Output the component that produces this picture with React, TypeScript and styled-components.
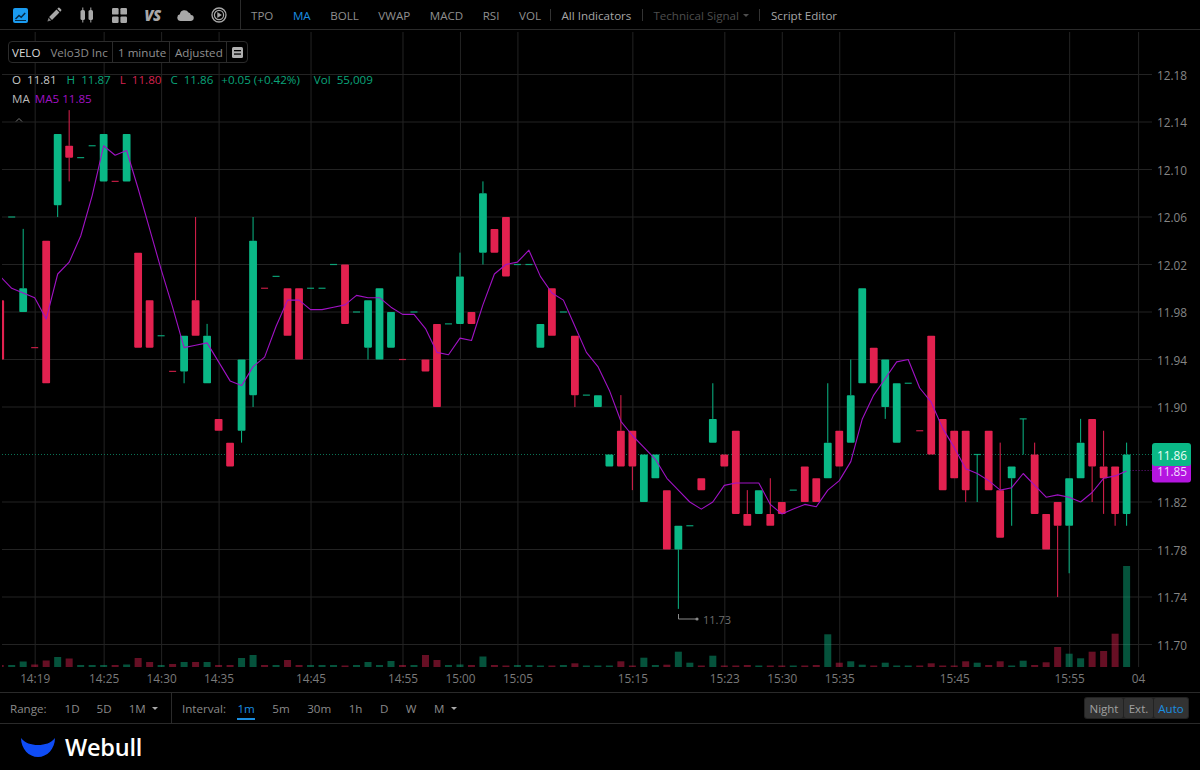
import React from "react";
import styled, { createGlobalStyle } from "styled-components";

const GlobalStyle = createGlobalStyle`
  html, body { margin: 0; padding: 0; background: #000; }
  body { font-family: "Open Sans", "Liberation Sans", sans-serif; }
`;

const Page = styled.div`
  width: 1200px;
  height: 770px;
  display: flex;
  flex-direction: column;
  background: #000;
  overflow: hidden;
  color: #999;
  font-size: 11.6px;
`;

const Toolbar = styled.div`
  height: 28px;
  padding-top: 1px;
  flex: none;
  display: flex;
  align-items: stretch;
  border-bottom: 1px solid #2a2a2a;
`;

const IconGroup = styled.div`
  width: 241px;
  margin-top: -1px;
  padding-top: 1px;
  box-sizing: border-box;
  padding-left: 4px;
  display: flex;
  align-items: center;
  border-right: 1px solid #2a2a2a;
`;

const IconSlot = styled.div`
  width: 33px;
  height: 100%;
  display: flex;
  align-items: center;
  justify-content: center;
  color: #a8a8a8;
`;

const VsMark = styled.span`
  font-family: "Open Sans", sans-serif;
  font-style: italic;
  font-weight: 800;
  font-size: 15px;
  letter-spacing: -0.5px;
  color: #a8a8a8;
`;

const Indicators = styled.div`
  display: flex;
  align-items: center;
  padding-left: 10px;
  gap: 19.5px;
`;

const Indicator = styled.span<{ $active?: boolean }>`
  color: ${(p) => (p.$active ? "#1a8ee0" : "#8f8f8f")};
`;

const ToolGroup = styled.div`
  display: flex;
  align-items: center;
  margin-left: -10.5px;
  gap: 10.5px;
`;

const Rule = styled.span`
  width: 1px;
  height: 12px;
  background: #333;
`;

const ToolLink = styled.span<{ $muted?: boolean }>`
  display: inline-flex;
  align-items: center;
  gap: 4px;
  color: ${(p) => (p.$muted ? "#4d4d4d" : "#a6a6a6")};
`;

const Caret = styled.span<{ $color?: string }>`
  width: 0;
  height: 0;
  border-left: 3px solid transparent;
  border-right: 3px solid transparent;
  border-top: 3px solid ${(p) => p.$color ?? "#aaa"};
`;

const ChartArea = styled.div`
  position: relative;
  height: 662px;
  flex: none;
`;

const ChartSvg = styled.svg`
  display: block;
  width: 1200px;
  height: 662px;
`;

const AxisText = styled.text<{ $tone?: string }>`
  font-family: "Open Sans", "Liberation Sans", sans-serif;
  font-size: 11.8px;
  fill: ${(p) => p.$tone ?? "#858585"};
`;

const LowText = styled(AxisText)`
  font-size: 11px;
`;

const InfoBox = styled.div`
  position: absolute;
  left: 8px;
  top: 11px;
  height: 20px;
  display: flex;
  align-items: stretch;
  border: 1px solid #2b2b2b;
  border-radius: 4px;
  background: #000;
`;

const InfoCell = styled.span<{ $strong?: boolean; $w: number; $pad: number }>`
  width: ${(p) => p.$w}px;
  box-sizing: border-box;
  padding-left: ${(p) => p.$pad}px;
  display: flex;
  align-items: center;
  white-space: pre;
  color: ${(p) => (p.$strong ? "#d8d8d8" : "#909090")};
  border-right: 1px solid #2b2b2b;
`;

const InfoName = styled.span`
  margin-left: 10px;
  color: #8c8c8c;
`;

const InfoIcon = styled.span`
  width: 20px;
  display: flex;
  align-items: center;
  justify-content: center;
`;

const Legend = styled.div`
  position: absolute;
  left: 12px;
  top: 40px;
  display: flex;
  flex-direction: column;
  gap: 1px;
`;

const LegendRow = styled.div`
  height: 18.5px;
  display: flex;
  align-items: center;
  white-space: pre;
`;

const LegendValue = styled.span<{ $c: string; $gap?: number }>`
  color: ${(p) => p.$c};
  margin-right: ${(p) => p.$gap ?? 0}px;
`;

const Collapse = styled.svg`
  position: absolute;
  left: 15px;
  top: 87px;
`;

const RangeBar = styled.div`
  height: 30px;
  flex: none;
  display: flex;
  align-items: center;
  border-top: 1px solid #2a2a2a;
  border-bottom: 1px solid #2a2a2a;
`;

const RangeGroup = styled.div`
  width: 172px;
  height: 100%;
  box-sizing: border-box;
  padding-left: 10px;
  display: flex;
  align-items: center;
  gap: 17px;
  border-right: 1px solid #2a2a2a;
`;

const IntervalGroup = styled.div`
  height: 100%;
  padding-left: 10px;
  display: flex;
  align-items: center;
  gap: 17.5px;
`;

const BarLabel = styled.span<{ $gap?: number }>`
  color: #8a8a8a;
  margin-right: ${(p) => p.$gap ?? 0}px;
`;

const BarItem = styled.span<{ $active?: boolean }>`
  position: relative;
  height: 100%;
  display: inline-flex;
  align-items: center;
  gap: 6px;
  color: ${(p) => (p.$active ? "#1a8ee0" : "#8a8a8a")};
  &::after {
    content: "";
    display: ${(p) => (p.$active ? "block" : "none")};
    position: absolute;
    left: 0;
    right: 0;
    bottom: 3px;
    height: 2px;
    background: #1a8ee0;
  }
`;

const SessionGroup = styled.div`
  margin-left: auto;
  margin-right: 11px;
  height: 20px;
  padding: 1px;
  display: flex;
  gap: 1px;
  background: #222;
  border-radius: 3px;
`;

const SessionButton = styled.span<{ $active?: boolean; $w: number }>`
  width: ${(p) => p.$w}px;
  display: flex;
  align-items: center;
  justify-content: center;
  font-size: 11.5px;
  border-radius: 2px;
  background: #333;
  color: ${(p) => (p.$active ? "#1a8ee0" : "#a0a0a0")};
`;

const Footer = styled.div`
  flex: 1;
  display: flex;
  align-items: center;
  padding-left: 21px;
  gap: 10px;
`;

const Brand = styled.span`
  font-family: "Open Sans", sans-serif;
  font-weight: 600;
  font-size: 23.5px;
  letter-spacing: -0.2px;
  color: #fff;
`;

type Candle = [string, number, number, number?, number?];

const candles: Candle[] = [
  ["r", 1199, 1194], ["g", 1206, 1206], ["g", 1200, 1198, 1205], ["r", 1195, 1195], ["r", 1204, 1192],
  ["g", 1213, 1207, undefined, 1206], ["r", 1212, 1211, 1215, 1209], ["g", 1211, 1211], ["g", 1212, 1212], ["g", 1213, 1209],
  ["r", 1209, 1209], ["g", 1213, 1209], ["r", 1203, 1195], ["r", 1199, 1195], ["g", 1196, 1196],
  ["r", 1193, 1193], ["g", 1196, 1193, undefined, 1192], ["r", 1199, 1196, 1206], ["g", 1196, 1192, 1197], ["r", 1189, 1188],
  ["r", 1187, 1185], ["g", 1194, 1188, undefined, 1187], ["g", 1204, 1191, 1206, 1190], ["r", 1200, 1200], ["g", 1201, 1201],
  ["r", 1200, 1196], ["r", 1200, 1194], ["g", 1200, 1200], ["g", 1200, 1200], ["g", 1202, 1202],
  ["r", 1202, 1197], ["g", 1198, 1198], ["g", 1199, 1195, undefined, 1194], ["g", 1200, 1194], ["g", 1198, 1195],
  ["r", 1194, 1194], ["g", 1198, 1198], ["r", 1194, 1193], ["r", 1197, 1190], ["g", 1197, 1197],
  ["g", 1201, 1197, 1203], ["r", 1198, 1197], ["g", 1208, 1203, 1209, 1202], ["r", 1205, 1203], ["r", 1206, 1201],
  ["g", 1202, 1202], ["g", 1202, 1202], ["g", 1197, 1195], ["r", 1200, 1196], ["g", 1198, 1198],
  ["r", 1196, 1191, undefined, 1190], ["g", 1191, 1191], ["g", 1191, 1190], ["g", 1186, 1185], ["r", 1188, 1185, 1191],
  ["r", 1188, 1185, undefined, 1183], ["g", 1186, 1182], ["g", 1186, 1184], ["r", 1183, 1178], ["g", 1180, 1178, undefined, 1173],
  ["g", 1180, 1180], ["r", 1184, 1183], ["g", 1189, 1187, 1192], ["r", 1186, 1185], ["r", 1188, 1181],
  ["r", 1181, 1180, 1183], ["g", 1183, 1181], ["r", 1181, 1180, 1184], ["r", 1182, 1181], ["g", 1183, 1183],
  ["r", 1185, 1182], ["r", 1184, 1182], ["g", 1187, 1184, 1192], ["r", 1188, 1185], ["g", 1191, 1187, 1194],
  ["g", 1200, 1192], ["r", 1195, 1192], ["g", 1194, 1190, undefined, 1189], ["g", 1192, 1187], ["g", 1192, 1192],
  ["r", 1188, 1188], ["r", 1196, 1186], ["r", 1189, 1183], ["r", 1188, 1184], ["r", 1188, 1183, undefined, 1182],
  ["g", 1186, 1186, undefined, 1182], ["r", 1188, 1183], ["r", 1183, 1179, 1187], ["g", 1185, 1184, undefined, 1180], ["g", 1189, 1189, undefined, 1186],
  ["r", 1186, 1181, 1187], ["r", 1181, 1178], ["r", 1182, 1180, undefined, 1174], ["g", 1184, 1180, undefined, 1176], ["g", 1187, 1184, 1189],
  ["r", 1189, 1185, undefined, 1182], ["r", 1185, 1184, 1188, 1181], ["r", 1185, 1181, undefined, 1180], ["g", 1186, 1181, 1187, 1180],
];

const volumes = [
  2, 2, 5.5, 2.5, 6.5, 10, 8.5, 2, 2, 2, 2, 2.5, 9, 5, 2, 3, 5, 5, 5, 2,
  2, 9, 12, 2, 2, 7, 2, 2, 2, 2, 1.5, 2, 5, 2, 6, 2, 2, 12, 7, 2,
  2.5, 2, 10.5, 2, 1.5, 2, 2, 1.5, 1.5, 2, 3.7, 1.5, 1.5, 1.5, 5.7, 1.5, 9.3, 2, 2.3, 15.3,
  4.3, 1.5, 11.3, 1.5, 1.5, 2, 1.5, 1.5, 1.5, 1.5, 1.5, 2, 32.7, 4.3, 5.7, 2.3, 1.5, 4.3, 1.5, 1.5,
  1.5, 3.7, 1.5, 1.5, 5.7, 4.3, 2, 5.7, 1.5, 6.3, 2, 4.7, 20, 13.3, 8.7, 15.3, 16, 33.3, 101,
];

const priceLabels = ["12.18", "12.14", "12.10", "12.06", "12.02", "11.98", "11.94", "11.90", "11.86", "11.82", "11.78", "11.74", "11.70"];

const timeMarks: [number, string][] = [
  [3, "14:19"], [9, "14:25"], [14, "14:30"], [19, "14:35"], [27, "14:45"], [35, "14:55"], [40, "15:00"],
  [45, "15:05"], [55, "15:15"], [63, "15:23"], [68, "15:30"], [73, "15:35"], [83, "15:45"], [93, "15:55"], [99, "04"],
];

const GREEN = "#0ab886";
const RED = "#e2214f";
const PURPLE = "#a012c4";

const xOf = (k: number) => 0.2 + k * 11.494;
const yOf = (cents: number) => 122 + (1214 - cents) * 11.875;

const closes = [1211, 1202, 1197, 1201, ...candles.map((c) => (c[0] === "g" ? c[1] : c[2]))];
const maPoints = candles
  .map((_, k) => {
    const slice = closes.slice(k, k + 5);
    const avg = slice.reduce((a, b) => a + b, 0) / 5;
    return `${xOf(k).toFixed(1)},${yOf(avg).toFixed(1)}`;
  })
  .join(" ");

const CandleMark: React.FC<{ data: Candle; k: number }> = ({ data, k }) => {
  const [side, top, bottom, hi, lo] = data;
  const c = side === "g" ? GREEN : RED;
  const x = xOf(k);
  const yt = yOf(top);
  const yb = yOf(bottom);
  return (
    <g>
      {hi !== undefined && <line x1={x} x2={x} y1={yOf(hi)} y2={yt} stroke={c} strokeWidth={1} />}
      {lo !== undefined && <line x1={x} x2={x} y1={yb} y2={yOf(lo)} stroke={c} strokeWidth={1} />}
      {top === bottom ? (
        <rect x={x - 3.5} y={yt - 0.6} width={7} height={1.2} fill={c} opacity={0.85} />
      ) : (
        <rect x={x - 3.9} y={yt} width={7.8} height={yb - yt} rx={0.8} fill={c} />
      )}
    </g>
  );
};

const Chart: React.FC = () => (
  <ChartSvg viewBox="0 30 1200 662">
    <defs>
      <clipPath id="plot">
        <rect x={2} y={30} width={1150} height={640} />
      </clipPath>
    </defs>
    {priceLabels.map((p, i) =>
      p === "11.86" ? null : (
        <line key={p} x1={2} x2={1152} y1={74.5 + i * 47.5} y2={74.5 + i * 47.5} stroke="#232323" strokeWidth={1} />
      )
    )}
    {timeMarks.map(([k]) => (
      <line key={k} x1={xOf(k) + 0.5} x2={xOf(k) + 0.5} y1={32} y2={667} stroke="#232323" strokeWidth={1} />
    ))}
    <line x1={2} x2={1152} y1={454.5} y2={454.5} stroke="#0a7355" strokeWidth={1} strokeDasharray="1 2" />
    <line x1={xOf(98)} x2={1152} y1={470.5} y2={470.5} stroke="#6f1288" strokeWidth={1} strokeDasharray="1 2" />
    <g clipPath="url(#plot)">
      {volumes.map((h, k) => (
        <rect
          key={k}
          x={xOf(k) - 3.5}
          y={667 - h}
          width={7}
          height={h}
          fill={candles[k][0] === "g" ? GREEN : RED}
          opacity={0.45}
        />
      ))}
      {candles.map((c, k) => (
        <CandleMark key={k} data={c} k={k} />
      ))}
      <polyline points={maPoints} fill="none" stroke={PURPLE} strokeWidth={1.1} strokeLinejoin="round" />
    </g>
    <path d="M678.5 614V619H697" fill="none" stroke="#8a8a8a" strokeWidth={1} />
    <circle cx={697} cy={619} r={1.6} fill="#8a8a8a" />
    <LowText x={703} y={619} dominantBaseline="central" $tone="#6f6f6f">
      11.73
    </LowText>
    {priceLabels.map((p, i) =>
      p === "11.86" ? null : (
        <AxisText key={p} x={1157} y={74.5 + i * 47.5} dominantBaseline="central">
          {p}
        </AxisText>
      )
    )}
    {timeMarks.map(([k, label]) => (
      <AxisText key={k} x={xOf(k) + 0.5} y={678} textAnchor="middle" dominantBaseline="central" $tone="#7a7a7a">
        {label}
      </AxisText>
    ))}
    <rect x={1152} y={458} width={39} height={24.5} rx={3} fill="#b415e0" />
    <rect x={1152} y={443} width={39} height={23} rx={3} fill="#0ab886" />
    <AxisText x={1157} y={454.5} dominantBaseline="central" $tone="#eafff6">
      11.86
    </AxisText>
    <AxisText x={1157} y={471} dominantBaseline="central" $tone="#f3dcff">
      11.85
    </AxisText>
  </ChartSvg>
);

const LineIcon = () => (
  <svg width="15" height="15" viewBox="0 0 15 15">
    <rect width="15" height="15" rx="2" fill="#1a9bf0" />
    <path d="M2.5 11 6 7.5l2.2 1.8 4-4.3" fill="none" stroke="#062a45" strokeWidth="1.5" />
    <rect x="2" y="12" width="11" height="1" fill="#062a45" />
  </svg>
);

const PencilIcon = () => (
  <svg width="16" height="16" viewBox="0 0 16 16" fill="currentColor">
    <path d="M10.5 2.6 13.4 5.5 6 12.9 3.1 10Z" />
    <path d="M11.3 1.8 12.3.8a.8.8 0 0 1 1.1 0l1.8 1.8a.8.8 0 0 1 0 1.1l-1 1Z" />
    <path d="M2.6 10.8 5.2 13.4 1.4 14.6Z" opacity=".75" />
  </svg>
);

const CandlesIcon = () => (
  <svg width="14" height="16" viewBox="0 0 14 16" fill="currentColor">
    <rect x="0.5" y="3" width="4.5" height="10" rx="1.6" />
    <rect x="2.3" y="0.5" width="1" height="15" />
    <rect x="8.5" y="3" width="4.5" height="10" rx="1.6" />
    <rect x="10.3" y="0.5" width="1" height="15" />
  </svg>
);

const GridIcon = () => (
  <svg width="15" height="15" viewBox="0 0 15 15" fill="currentColor">
    <rect width="6.6" height="6.6" rx="1.2" />
    <rect x="8.4" width="6.6" height="6.6" rx="1.2" />
    <rect y="8.4" width="6.6" height="6.6" rx="1.2" />
    <rect x="8.4" y="8.4" width="6.6" height="6.6" rx="1.2" />
  </svg>
);

const CloudIcon = () => (
  <svg width="17" height="12" viewBox="0 0 17 12" fill="currentColor">
    <path d="M3.6 12A3.4 3.4 0 0 1 2.9 5.3 4.6 4.6 0 0 1 11.5 3.6 3.3 3.3 0 0 1 13.9 6 3 3 0 0 1 13.6 12Z" />
  </svg>
);

const ReplayIcon = () => (
  <svg width="16" height="16" viewBox="0 0 16 16" fill="none" stroke="currentColor">
    <circle cx="8" cy="8" r="7" strokeWidth="1.3" />
    <circle cx="8" cy="8" r="4.6" strokeWidth="1.2" />
    <path d="M6.6 5.6 10.4 8 6.6 10.4Z" fill="currentColor" strokeWidth="0.6" />
  </svg>
);

const NoteIcon = () => (
  <svg width="11" height="11" viewBox="0 0 11 11">
    <rect width="11" height="11" rx="1.5" fill="#b0b0b0" />
    <rect x="2" y="3" width="7" height="1.3" fill="#000" />
    <rect x="2" y="6.4" width="7" height="1.3" fill="#000" />
  </svg>
);

const WebullLogo = () => (
  <svg width="34" height="20" viewBox="0 0 34 20">
    <path d="M0 1C0 12 8 20 17 20S34 12 34 1C30 6 24 8 17 8S4 6 0 1Z" fill="#0f4cf5" />
  </svg>
);

const App: React.FC = () => (
  <>
    <GlobalStyle />
    <Page>
      <Toolbar>
        <IconGroup>
          <IconSlot><LineIcon /></IconSlot>
          <IconSlot><PencilIcon /></IconSlot>
          <IconSlot><CandlesIcon /></IconSlot>
          <IconSlot><GridIcon /></IconSlot>
          <IconSlot><VsMark>VS</VsMark></IconSlot>
          <IconSlot><CloudIcon /></IconSlot>
          <IconSlot><ReplayIcon /></IconSlot>
        </IconGroup>
        <Indicators>
          <Indicator>TPO</Indicator>
          <Indicator $active>MA</Indicator>
          <Indicator>BOLL</Indicator>
          <Indicator>VWAP</Indicator>
          <Indicator>MACD</Indicator>
          <Indicator>RSI</Indicator>
          <Indicator>VOL</Indicator>
          <ToolGroup>
            <Rule />
            <ToolLink>All Indicators</ToolLink>
            <Rule />
            <ToolLink $muted>
              Technical Signal <Caret $color="#4d4d4d" />
            </ToolLink>
            <Rule />
            <ToolLink>Script Editor</ToolLink>
          </ToolGroup>
        </Indicators>
      </Toolbar>
      <ChartArea>
        <Chart />
        <InfoBox>
          <InfoCell $strong $w={104} $pad={3}>
            VELO<InfoName>Velo3D Inc</InfoName>
          </InfoCell>
          <InfoCell $w={57} $pad={5}>1 minute</InfoCell>
          <InfoCell $w={57} $pad={5}>Adjusted</InfoCell>
          <InfoIcon><NoteIcon /></InfoIcon>
        </InfoBox>
        <Legend>
          <LegendRow>
            <LegendValue $c="#c8c8c8" $gap={10}>O  11.81</LegendValue>
            <LegendValue $c="#0aa57a" $gap={9}>H  11.87</LegendValue>
            <LegendValue $c="#d5224f" $gap={9}>L  11.80</LegendValue>
            <LegendValue $c="#0aa57a" $gap={8}>C  11.86</LegendValue>
            <LegendValue $c="#0aa57a" $gap={14}>+0.05 (+0.42%)</LegendValue>
            <LegendValue $c="#0aa57a">Vol  55,009</LegendValue>
          </LegendRow>
          <LegendRow>
            <LegendValue $c="#b8b8b8" $gap={5}>MA</LegendValue>
            <LegendValue $c={PURPLE}>MA5 11.85</LegendValue>
          </LegendRow>
        </Legend>
        <Collapse width="8" height="5" viewBox="0 0 8 5">
          <path d="M1 4.5 4 1.5l3 3" fill="none" stroke="#777" strokeWidth="1" />
        </Collapse>
      </ChartArea>
      <RangeBar>
        <RangeGroup>
          <BarLabel $gap={1}>Range:</BarLabel>
          <BarItem>1D</BarItem>
          <BarItem>5D</BarItem>
          <BarItem>
            1M <Caret />
          </BarItem>
        </RangeGroup>
        <IntervalGroup>
          <BarLabel $gap={-6}>Interval:</BarLabel>
          <BarItem $active>1m</BarItem>
          <BarItem>5m</BarItem>
          <BarItem>30m</BarItem>
          <BarItem>1h</BarItem>
          <BarItem>D</BarItem>
          <BarItem>W</BarItem>
          <BarItem>
            M <Caret />
          </BarItem>
        </IntervalGroup>
        <SessionGroup>
          <SessionButton $w={38}>Night</SessionButton>
          <SessionButton $w={29}>Ext.</SessionButton>
          <SessionButton $active $w={34}>Auto</SessionButton>
        </SessionGroup>
      </RangeBar>
      <Footer>
        <WebullLogo />
        <Brand>Webull</Brand>
      </Footer>
    </Page>
  </>
);

export default App;
